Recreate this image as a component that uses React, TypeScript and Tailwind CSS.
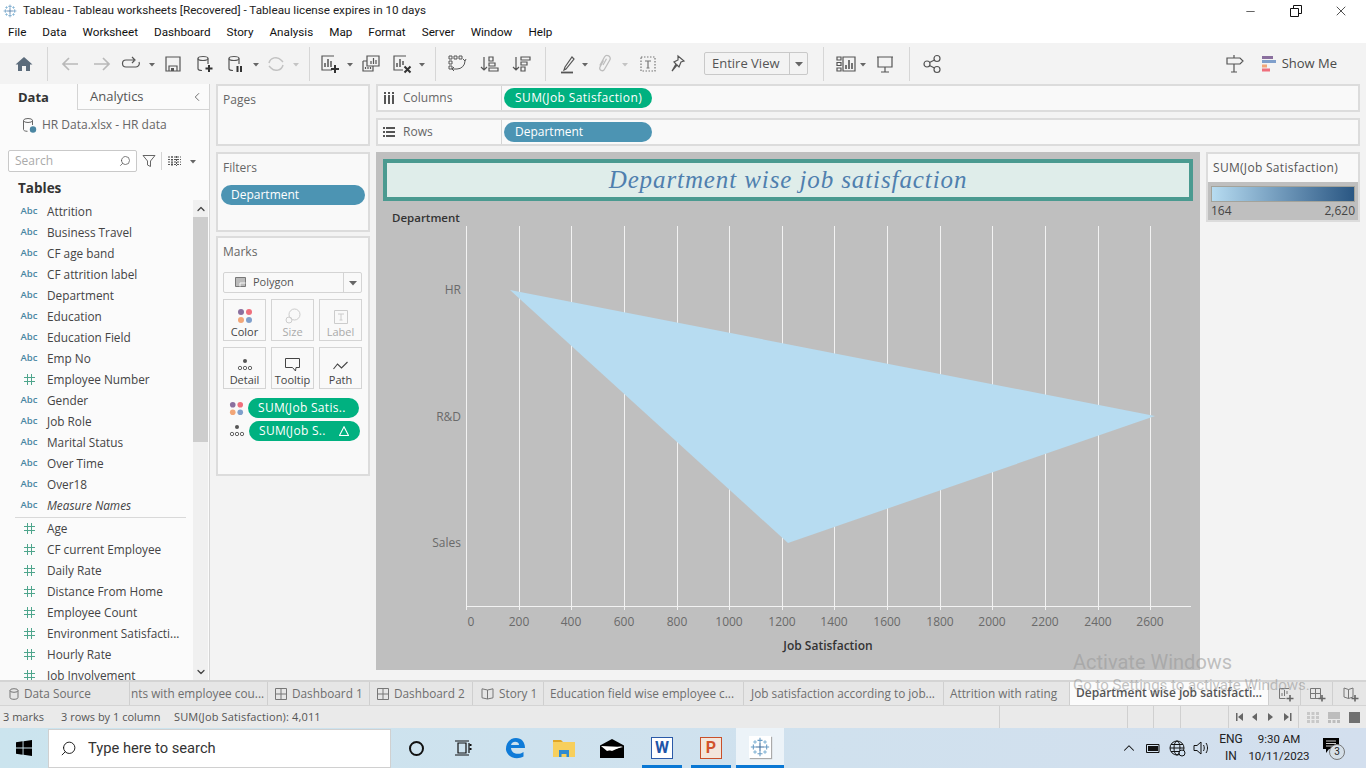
import type { ReactNode } from 'react'
import { ChevronLeft, ChevronUp, ChevronDown, Minus, X, Search } from 'lucide-react'

const menus = ['File', 'Data', 'Worksheet', 'Dashboard', 'Story', 'Analysis', 'Map', 'Format', 'Server', 'Window', 'Help']

const dimensions = [
  'Attrition',
  'Business Travel',
  'CF age band',
  'CF attrition label',
  'Department',
  'Education',
  'Education Field',
  'Emp No',
  '#Employee Number',
  'Gender',
  'Job Role',
  'Marital Status',
  'Over Time',
  'Over18',
]

const measures = [
  'Age',
  'CF current Employee',
  'Daily Rate',
  'Distance From Home',
  'Employee Count',
  'Environment Satisfacti...',
  'Hourly Rate',
  'Job Involvement',
]

const gridX = [466, 519, 571, 624, 677, 729, 782, 834, 887, 940, 992, 1045, 1098, 1150]

function Caret({ className = '', muted = false }: { className?: string; muted?: boolean }) {
  return (
    <svg width="8" height="20" viewBox="0 0 8 20" className={`shrink-0 ${className}`}>
      <path d="M1 9h6l-3 3.5z" fill={muted ? '#c4c4c4' : '#666'} />
    </svg>
  )
}

function Sep({ className = '' }: { className?: string }) {
  return <div className={`w-px h-[34px] bg-[#d6d6d6] shrink-0 ${className}`} />
}

function Ico({ className = '', children, color = '#5f6b73' }: { className?: string; children: ReactNode; color?: string }) {
  return (
    <svg width="20" height="20" viewBox="0 0 20 20" fill="none" stroke={color} strokeWidth="1.2" className={`shrink-0 ${className}`}>
      {children}
    </svg>
  )
}

function Dots({ size = 16 }: { size?: number }) {
  return (
    <svg width={size} height={size} viewBox="0 0 16 16" className="shrink-0">
      <circle cx="4" cy="4" r="3" fill="#8a6f9e" />
      <circle cx="12" cy="4" r="3" fill="#ef6f7c" />
      <circle cx="4" cy="12" r="3" fill="#f2a678" />
      <circle cx="12" cy="12" r="3" fill="#7f9fcb" />
    </svg>
  )
}

function DetailDots() {
  return (
    <svg width="16" height="14" viewBox="0 0 16 14" fill="none" stroke="#555" strokeWidth="0.9" className="shrink-0">
      <circle cx="8" cy="3" r="2" fill="#555" stroke="none" />
      <circle cx="3" cy="10" r="1.7" />
      <circle cx="8" cy="10" r="1.7" />
      <circle cx="13" cy="10" r="1.7" />
    </svg>
  )
}

function TableauLogo({ size = 16 }: { size?: number }) {
  const cross = (x: number, y: number, r: number, c: string, key: string) => (
    <path key={key} d={`M${x - r} ${y}H${x + r}M${x} ${y - r}V${y + r}`} stroke={c} strokeWidth="1.3" />
  )
  return (
    <svg width={size} height={size} viewBox="0 0 24 24" fill="none" className="shrink-0">
      {cross(12, 12, 5, '#3f6f9e', 'c')}
      {cross(12, 4, 3, '#6a9cc4', 't')}
      {cross(12, 20, 3, '#6a9cc4', 'b')}
      {cross(4, 12, 3, '#6a9cc4', 'l')}
      {cross(20, 12, 3, '#6a9cc4', 'r')}
      {cross(6, 6, 2.2, '#7fb2d4', 'tl')}
      {cross(18, 6, 2.2, '#7fb2d4', 'tr')}
      {cross(6, 18, 2.2, '#7fb2d4', 'bl')}
      {cross(18, 18, 2.2, '#7fb2d4', 'br')}
    </svg>
  )
}

function Toolbar() {
  return (
    <div className="h-[41px] bg-[#f3f3f3] flex items-center shrink-0">
      <Ico className="ml-[14px]" color="#5b6b7b">
        <path d="M1.5 10.5 10 3l8.5 7.5H16V17h-4v-5H8v5H4v-6.500z" fill="#5b6b7b" stroke="none" />
      </Ico>
      <Sep className="ml-[13px]" />
      <Ico className="ml-[12px]" color="#b9b9b9">
        <path d="M18 10H3M9 4l-6 6 6 6" strokeWidth="1.7" />
      </Ico>
      <Ico className="ml-[12px]" color="#b9b9b9">
        <path d="M2 10h15M11 4l6 6-6 6" strokeWidth="1.7" />
      </Ico>
      <Ico className="ml-[9px]" color="#555">
        <path d="M13 6H5a3.500 3.500 0 0 0 0 7h10a3.500 3.500 0 0 0 3-5M11 3l3 3-3 3" />
      </Ico>
      <Caret className="ml-[7px]" />
      <Ico className="ml-[7px]" color="#555">
        <path d="M3 3h14v14H3zM6 17v-5h8v5" />
        <path d="M8 14h3v3H8z" fill="#555" stroke="none" />
      </Ico>
      <Ico className="ml-[12px]" color="#555">
        <ellipse cx="8" cy="4.500" rx="5" ry="2" />
        <path d="M3 4.500v10c0 1 1.500 2 4 2M13 4.500V10" />
        <path d="M14 11v7M10.500 14.500h7" stroke="#333" strokeWidth="2" />
      </Ico>
      <Ico className="ml-[11px]" color="#555">
        <ellipse cx="8" cy="4.500" rx="5" ry="2" />
        <path d="M3 4.500v10c0 1 1.500 2 4 2M13 4.500V10" />
        <path d="M11.500 12v6M15 12v6" stroke="#333" strokeWidth="2" />
      </Ico>
      <Caret className="ml-[6px]" />
      <Ico className="ml-[6px]" color="#c2c2c2">
        <path d="M3 9a7 7 0 0 1 12-3l2 2M17 11a7 7 0 0 1-12 3l-2-2" strokeWidth="1.500" />
      </Ico>
      <Caret className="ml-[6px]" muted />
      <Sep className="ml-[9px]" />
      <Ico className="ml-[10px]" color="#555">
        <path d="M14 2H2v14h10" />
        <path d="M5 13V9M8 13V5M11 13V7" strokeWidth="1.500" />
        <path d="M15 11v8M11 15h8" stroke="#333" strokeWidth="2" />
      </Ico>
      <Caret className="ml-[6px]" />
      <Ico className="ml-[7px]" color="#555">
        <path d="M6 2h12v10H6zM2 7h4M2 7v10h10v-5" />
        <path d="M10 10V7M12.500 10V4M15 10V6M4.500 15v-2M7 15v-2M9.500 15v-2" />
      </Ico>
      <Ico className="ml-[11px]" color="#555">
        <path d="M14 2H2v14h9" />
        <path d="M5 13V9M8 13V5M11 11V7" strokeWidth="1.500" />
        <path d="m12.500 12.500 6 6M18.500 12.500l-6 6" stroke="#333" strokeWidth="2" />
      </Ico>
      <Caret className="ml-[6px]" />
      <Sep className="ml-[9px]" />
      <Ico className="ml-[11px]" color="#555">
        <path d="M2 2h3v3H2zM7 2h3v3H7zM12 2h3v3h-3zM2 7h3v3H2zM2 12h3v3H2zM7 17l-2-2 2-2M5 15h5a8 8 0 0 0 8-8M16 5l2 2 1-2" strokeWidth="1" />
      </Ico>
      <Ico className="ml-[12px]" color="#555">
        <path d="M5 3v13M2 13l3 3 3-3M10 3h4v4h-4zM10 9h6v3h-6zM10 14h9v3h-9z" />
      </Ico>
      <Ico className="ml-[12px]" color="#555">
        <path d="M5 3v13M2 13l3 3 3-3M10 3h9v3h-9zM10 8h6v3h-6zM10 13h4v4h-4z" />
      </Ico>
      <Sep className="ml-[14px]" />
      <Ico className="ml-[12px]" color="#555">
        <path d="m7 13 7-10 2 2-8 10-2 1z" />
        <path d="M3 18.500h12" strokeWidth="1.800" />
      </Ico>
      <Caret className="ml-[3px]" />
      <Ico className="ml-[6px]" color="#bdbdbd">
        <path d="M8.500 6.500 5 13a2.500 2.500 0 0 0 4.500 2.300L14.800 6A3 3 0 0 0 9.500 3L4.800 11.500" strokeWidth="1.300" />
        <path d="m8 11 3.500-6.200" strokeWidth="1.300" />
      </Ico>
      <Caret className="ml-[6px]" muted />
      <Ico className="ml-[9px]" color="#777">
        <path d="M3 3h14v14H3z" strokeDasharray="1.500 1.500" />
        <path d="M7 7h6M10 7v7M8.500 14h3" />
      </Ico>
      <Ico className="ml-[9px]" color="#555">
        <path d="m11 2 6 5-3 1-2 5-2-2-5 6 4-7-2-2 4-2z" />
      </Ico>
      <div className="ml-[17px] w-[104px] h-[23px] flex border border-[#c9c9c9] rounded-[2px] text-[13px] text-[#555] shrink-0">
        <span className="w-[85px] border-r border-[#c9c9c9] pl-[7px] leading-[20px]">Entire View</span>
        <span className="flex-1 flex items-center justify-center">
          <svg width="8" height="6" viewBox="0 0 8 6">
            <path d="M0 1h8L4 5.500z" fill="#666" />
          </svg>
        </span>
      </div>
      <Sep className="ml-[15px]" />
      <Ico className="ml-[12px]" color="#555">
        <path d="M1 3h4v3H1zM1 8.500h4v3H1zM1 14h4v3H1zM7 3h12v14H7z" />
        <path d="M10 15v-4M13 15V6M16 15V9" strokeWidth="1.600" />
      </Ico>
      <Caret className="ml-[3px]" />
      <Ico className="ml-[8px]" color="#555">
        <path d="M2 3h16M3 3v10h14V3M10 13v5M6 18h8" />
      </Ico>
      <Sep className="ml-[14px]" />
      <Ico className="ml-[12px]" color="#555">
        <circle cx="5" cy="10" r="3" />
        <circle cx="15" cy="4.500" r="3" />
        <circle cx="15" cy="15.500" r="3" />
        <path d="m7.500 8.500 5-2.500M7.500 11.500l5 2.500" />
      </Ico>
      <Ico className="ml-auto" color="#555">
        <path d="M10 1v3M3 4h13l3 3-3 3H3zM10 10v8M7 18h6" />
      </Ico>
      <div className="ml-[18px] mr-[29px] flex items-center gap-[6px] text-[13px] text-[#4a4a4a]">
        <svg width="14" height="16" viewBox="0 0 14 16">
          <rect x="0" y="0" width="11" height="3" fill="#8a6f9e" />
          <rect x="0" y="4" width="14" height="3" fill="#7f9fcb" />
          <rect x="0" y="8.500" width="5" height="3" fill="#f2a678" />
          <rect x="0" y="12.500" width="8" height="3" fill="#ef6f7c" />
        </svg>
        <span>Show Me</span>
      </div>
    </div>
  )
}

function FieldRow({ name, icon, italic = false }: { name: string; icon: 'abc' | 'num'; italic?: boolean }) {
  return (
    <div className="h-[21px] flex items-center shrink-0">
      <span className="w-[47px] flex justify-center pl-[11px]">
        {icon === 'abc' ? (
          <span className="text-[9.500px] font-semibold text-[#4a86a2]">Abc</span>
        ) : (
          <svg width="11" height="11" viewBox="0 0 11 11" fill="none" stroke="#4ea58c" strokeWidth="1">
            <path d="M3.500 0v11M7.500 0v11M0 3.500h11M0 7.500h11" />
          </svg>
        )}
      </span>
      <span className={`text-[11.800px] text-[#444] whitespace-nowrap ${italic ? 'italic' : ''}`}>{name}</span>
    </div>
  )
}

function DataPane() {
  return (
    <aside className="w-[210px] h-full bg-[#fbfbfb] border-r border-[#d4d4d4] flex flex-col shrink-0 overflow-hidden">
      <div className="h-[26px] flex shrink-0">
        <div className="w-[77px] pl-[18px] text-[13px] font-bold text-[#333] leading-[27px]">Data</div>
        <div className="flex-1 flex items-center justify-between border-l border-b border-[#d4d4d4] pl-[12px] pr-[5px] pt-[1px] text-[13px] text-[#555]">
          <span>Analytics</span>
          <ChevronLeft size={14} strokeWidth={1.4} />
        </div>
      </div>
      <div className="h-[30px] flex items-center pl-[22px] gap-[5px] text-[12px] text-[#666] shrink-0">
        <svg width="15" height="16" viewBox="0 0 15 16" fill="none" stroke="#666" strokeWidth="1">
          <ellipse cx="6" cy="3.500" rx="4.500" ry="2" />
          <path d="M1.500 3.500v9c0 1 1.500 1.800 4 1.800M10.500 3.500V8" />
          <circle cx="11" cy="12.500" r="3.200" fill="#4a86a2" stroke="none" />
        </svg>
        <span>HR Data.xlsx - HR data</span>
      </div>
      <div className="mt-[10px] h-[22px] flex items-center pl-[8px] shrink-0">
        <div className="w-[129px] h-[22px] border border-[#c9c9c9] rounded-[2px] bg-white flex items-center justify-between pl-[6px] pr-[5px]">
          <span className="text-[12px] text-[#aaa]">Search</span>
          <Search size={12} strokeWidth={1.5} className="text-[#555] -scale-x-100" />
        </div>
        <svg width="14" height="14" viewBox="0 0 14 14" fill="none" stroke="#666" strokeWidth="1" className="ml-[5px]">
          <path d="M1 1.500h12L8.500 7v5.500L5.500 11V7z" />
        </svg>
        <div className="w-px h-[18px] bg-[#d4d4d4] ml-[5px]" />
        <svg width="13" height="10" viewBox="0 0 13 10" stroke="#555" strokeWidth="1" className="ml-[6px]">
          <path d="M0 1h13M0 3.500h13M0 6h13M0 8.500h13M4 0v10M8.500 0v10" strokeDasharray="2 1" />
        </svg>
        <Caret className="ml-[8px]" />
      </div>
      <div className="h-[28px] pl-[18px] text-[13.500px] font-bold text-[#333] leading-[33px] shrink-0">Tables</div>
      <div className="flex-1 flex min-h-0">
        <div className="w-[193px] overflow-hidden flex flex-col shrink-0 pt-[1px]">
          {dimensions.map((d) =>
            d.startsWith('#') ? <FieldRow key={d} name={d.slice(1)} icon="num" /> : <FieldRow key={d} name={d} icon="abc" />
          )}
          <FieldRow name="Measure Names" icon="abc" italic />
          <div className="h-px bg-[#d9d9d9] mx-[15px] mt-[1px] w-[171px] shrink-0" />
          {measures.map((m) => (
            <FieldRow key={m} name={m} icon="num" />
          ))}
        </div>
        <div className="w-[15px] flex flex-col bg-[#f0f0f0] shrink-0">
          <div className="h-[17px] flex items-center justify-center">
            <ChevronUp size={12} strokeWidth={2.5} className="text-[#444]" />
          </div>
          <div className="h-[225px] bg-[#cdcdcd]" />
          <div className="flex-1" />
          <div className="h-[17px] flex items-center justify-center">
            <ChevronDown size={12} strokeWidth={2.5} className="text-[#444]" />
          </div>
        </div>
      </div>
    </aside>
  )
}

function MarkCard({ label, dim = false, children }: { label: string; dim?: boolean; children: ReactNode }) {
  return (
    <div className="w-[43px] h-[42px] border border-[#d4d4d4] flex flex-col items-center">
      <div className="h-[24px] flex items-end justify-center">{children}</div>
      <span className={`text-[11px] leading-[15px] ${dim ? 'text-[#aaa]' : 'text-[#444]'}`}>{label}</span>
    </div>
  )
}

function Shelves() {
  return (
    <div className="w-[154px] ml-[6px] flex flex-col shrink-0">
      <div className="h-[62px] border-2 border-[#dcdcdc] bg-[#f9f9f9] px-[5px] pt-[5px] text-[12px] text-[#666]">Pages</div>
      <div className="h-[80px] mt-[6px] border-2 border-[#dcdcdc] bg-[#f9f9f9] pt-[5px] text-[12px] text-[#666]">
        <div className="px-[5px]">Filters</div>
        <div className="mt-[8px] mx-[3px] h-[20px] rounded-full bg-[#4c94b3] text-white pl-[10px] leading-[20px]">Department</div>
      </div>
      <div className="h-[240px] mt-[4px] border-2 border-[#dcdcdc] bg-[#f9f9f9] pt-[5px] text-[12px] text-[#666]">
        <div className="px-[5px]">Marks</div>
        <div className="mt-[11px] mx-[5px] w-[139px] h-[21px] border border-[#d4d4d4] rounded-[2px] flex items-center text-[11px] text-[#555]">
          <svg width="12" height="11" viewBox="0 0 12 11" fill="none" stroke="#777" className="ml-[11px]">
            <path d="M.5.500h10v9H.500z" fill="#bbb" />
            <path d="M5 9.500V6h5.500" stroke="#f9f9f9" />
          </svg>
          <span className="ml-[6px]">Polygon</span>
          <span className="ml-auto w-[18px] h-full border-l border-[#d4d4d4] flex items-center justify-center">
            <svg width="8" height="6" viewBox="0 0 8 6">
              <path d="M0 1h8L4 5.500z" fill="#666" />
            </svg>
          </span>
        </div>
        <div className="mt-[6px] mx-[5px] grid grid-cols-[43px_43px_43px] gap-x-[5px] gap-y-[6px]">
          <MarkCard label="Color">
            <Dots />
          </MarkCard>
          <MarkCard label="Size" dim>
            <svg width="16" height="16" viewBox="0 0 16 16" fill="none" stroke="#ccc">
              <circle cx="9.500" cy="6.500" r="5.500" />
              <circle cx="4" cy="12" r="3" />
            </svg>
          </MarkCard>
          <MarkCard label="Label" dim>
            <svg width="14" height="14" viewBox="0 0 14 14" fill="none" stroke="#ccc">
              <path d="M.5.500h13v13H.500zM4 4h6M7 4v6M5.500 10h3" />
            </svg>
          </MarkCard>
          <MarkCard label="Detail">
            <DetailDots />
          </MarkCard>
          <MarkCard label="Tooltip">
            <svg width="15" height="15" viewBox="0 0 15 15" fill="none" stroke="#444">
              <path d="M.5 1.500h14v9H11L10.500 14 7.500 10.500h-7z" />
            </svg>
          </MarkCard>
          <MarkCard label="Path">
            <svg width="15" height="12" viewBox="0 0 15 12" fill="none" stroke="#444" strokeWidth="1.100">
              <path d="m.5 9 4-5 4 4 6-6" />
            </svg>
          </MarkCard>
        </div>
        <div className="mt-[9px] pl-[11px] flex items-center gap-[4px]">
          <Dots size={15} />
          <div className="w-[111px] h-[20px] rounded-full bg-[#00b180] text-white pl-[10px] tracking-[0.3px] leading-[20px] whitespace-nowrap">SUM(Job Satis..</div>
        </div>
        <div className="mt-[3px] pl-[11px] flex items-center gap-[4px]">
          <DetailDots />
          <div className="w-[111px] h-[20px] rounded-full bg-[#00b180] text-white pl-[10px] pr-[11px] tracking-[0.3px] flex items-center justify-between whitespace-nowrap">
            <span>SUM(Job S..</span>
            <svg width="10" height="10" viewBox="0 0 10 10" fill="none" stroke="#fff" strokeWidth="1.100">
              <path d="M5 .800 9.500 9.500H.500z" />
            </svg>
          </div>
        </div>
      </div>
    </div>
  )
}

function ShelfRow({ label, icon, children }: { label: string; icon: ReactNode; children: ReactNode }) {
  return (
    <div className="h-[28px] border-2 border-[#dcdcdc] bg-[#f9f9f9] flex items-center">
      <div className="w-[124px] h-full border-r border-[#d4d4d4] flex items-center pl-[5px] gap-[8px] text-[12px] text-[#666]">
        {icon}
        <span>{label}</span>
      </div>
      {children}
    </div>
  )
}

function Chart() {
  return (
    <div className="w-[824px] h-[518px] bg-[#bfbfbf] flex flex-col">
      <div className="mt-[7px] mx-[7px] h-[42px] border-[4px] border-[#4a9a90] bg-[#dfedea] flex items-center justify-center shrink-0">
        <span className="font-['Liberation_Serif',serif] italic text-[25px] tracking-[0.9px] text-[#4f7fae]">Department wise job satisfaction</span>
      </div>
      <svg viewBox="376 201 824 469" width="824" height="469" className="block">
        {gridX.map((x) => (
          <line key={x} x1={x + 0.5} x2={x + 0.5} y1={226} y2={610} stroke="#f2f2f2" strokeWidth="1" />
        ))}
        <line x1={466} x2={1191} y1={606.5} y2={606.5} stroke="#f2f2f2" strokeWidth="1" />
        <polygon points="510,290 1155,416 788,543" fill="#b7dcf1" />
        <g fontSize="12" fill="#6a6a6a" textAnchor="end">
          <text x={461} y={294}>HR</text>
          <text x={461} y={421}>R&amp;D</text>
          <text x={461} y={547}>Sales</text>
        </g>
        <g fontSize="12" fill="#6a6a6a" textAnchor="middle">
          {gridX.map((x, i) => (
            <text key={x} x={i === 0 ? x + 5 : x} y={626}>
              {i * 200}
            </text>
          ))}
        </g>
        <text x={392} y={222} fontSize="11.500" fontWeight="600" fill="#333">
          Department
        </text>
        <text x={828} y={650} fontSize="12" fontWeight="600" fill="#333" textAnchor="middle">
          Job Satisfaction
        </text>
      </svg>
    </div>
  )
}

function Legend() {
  return (
    <div className="w-[154px] h-[70px] ml-[6px] border-2 border-[#dcdcdc] bg-[#bfbfbf] flex flex-col shrink-0">
      <div className="h-[28px] bg-[#f9f9f9] pl-[5px] text-[12px] tracking-[0.3px] text-[#555] leading-[27px] shrink-0">SUM(Job Satisfaction)</div>
      <div className="mx-[3px] mt-[4px] h-[16px] border border-[#a3a39b] bg-gradient-to-r from-[#b7dcf1] to-[#2a5783] shrink-0" />
      <div className="mx-[3px] flex justify-between text-[12px] text-[#444] leading-[18px] shrink-0">
        <span>164</span>
        <span>2,620</span>
      </div>
    </div>
  )
}

function SheetTabs() {
  const tabIcon = (kind: string) => {
    if (kind === 'dash')
      return (
        <svg width="12" height="12" viewBox="0 0 12 12" fill="none" stroke="#777">
          <path d="M.5.500h11v11H.500zM6 .500v11M.5 6h11" />
        </svg>
      )
    return (
      <svg width="13" height="12" viewBox="0 0 13 12" fill="none" stroke="#777">
        <path d="M6.500 2 1 .800v9L6.500 11 12 9.800v-9zM6.500 2v9" />
      </svg>
    )
  }
  const cell = 'h-full border-r border-[#cfcfcf] flex items-center text-[11.800px] text-[#6e6e6e] whitespace-nowrap overflow-hidden shrink-0'
  return (
    <div className="h-[26px] bg-[#e6e6e6] border-t-2 border-b border-[#d4d4d4] flex shrink-0">
      <div className={`${cell} w-[130px] pl-[9px] gap-[5px]`}>
        <svg width="10" height="12" viewBox="0 0 10 12" fill="none" stroke="#777">
          <ellipse cx="5" cy="2.500" rx="4" ry="1.800" />
          <path d="M1 2.500v7c0 1 1.500 1.800 4 1.800s4-.800 4-1.800v-7" />
        </svg>
        <span>Data Source</span>
      </div>
      <div className={`${cell} w-[138px] pl-[1px]`}>nts with employee cou...</div>
      <div className={`${cell} w-[102px] pl-[7px] gap-[5px]`}>
        {tabIcon('dash')}
        <span>Dashboard 1</span>
      </div>
      <div className={`${cell} w-[103px] pl-[7px] gap-[5px]`}>
        {tabIcon('dash')}
        <span>Dashboard 2</span>
      </div>
      <div className={`${cell} w-[71px] pl-[8px] gap-[5px]`}>
        {tabIcon('story')}
        <span>Story 1</span>
      </div>
      <div className={`${cell} w-[200px] pl-[6px]`}>Education field wise employee c...</div>
      <div className={`${cell} w-[200px] pl-[7px]`}>Job satisfaction according to job...</div>
      <div className={`${cell} w-[126px] pl-[6px]`}>Attrition with rating</div>
      <div className="w-[199px] h-full bg-[#fbfbfb] border-r border-[#cfcfcf] pl-[6px] text-[12px] font-semibold text-[#555] leading-[21px] whitespace-nowrap overflow-hidden shrink-0">
        Department wise job satisfacti...
      </div>
      <div className="w-[32px] h-full border-r border-[#cfcfcf] flex items-center justify-center pl-[3px] shrink-0">
        <svg width="16" height="16" viewBox="0 0 16 16" fill="none" stroke="#777">
          <path d="M11 2.500H1.500v10h6M4 10V7M6.500 10V4M9 8V5" />
          <path d="M12 9v6.500M8.500 12.500h7" stroke="#666" strokeWidth="1.600" />
        </svg>
      </div>
      <div className="w-[32px] h-full border-r border-[#cfcfcf] flex items-center justify-center pl-[3px] shrink-0">
        <svg width="16" height="16" viewBox="0 0 16 16" fill="none" stroke="#777">
          <path d="M.5 2.500h10v10H.500zM5.500 2.500v10M.5 7.500h10" />
          <path d="M12 9v6.500M8.500 12.500h7" stroke="#666" strokeWidth="1.600" />
        </svg>
      </div>
      <div className="flex-1 flex items-center justify-center pl-[3px]">
        <svg width="16" height="16" viewBox="0 0 16 16" fill="none" stroke="#777">
          <path d="M5.500 3.500 1 2v9l4.500 1.500L10 11V2zM5.500 3.500v9" />
          <path d="M12 9v6.500M8.500 12.500h7" stroke="#666" strokeWidth="1.600" />
        </svg>
      </div>
    </div>
  )
}

function StatusBar() {
  return (
    <div className="h-[22px] bg-[#eaeaea] flex items-center text-[11px] text-[#555] shrink-0">
      <span className="w-[58px] pl-[3px]">3 marks</span>
      <span className="ml-[3px] w-[113px]">3 rows by 1 column</span>
      <span className="w-[825px] tracking-[0.15px]">SUM(Job Satisfaction): 4,011</span>
      <span className="w-px h-full bg-[#d0d0d0]" />
      <span className="w-[127px]" />
      <span className="w-px h-full bg-[#d0d0d0]" />
      <span className="w-[25px]" />
      <span className="w-px h-full bg-[#d0d0d0]" />
      <span className="w-[26px]" />
      <span className="w-px h-full bg-[#d0d0d0]" />
      <span className="w-[47px]" />
      <span className="w-px h-full bg-[#d0d0d0]" />
      <svg width="60" height="10" viewBox="0 0 60 10" fill="#666" className="ml-[6px]">
        <path d="M1 1h1.500v8H1zM8 1v8L3 5zM22 1v8l-5-4zM33 1v8l5-4zM49 1v8l5-4zM55 1h1.500v8H55z" />
      </svg>
      <span className="ml-[3px] w-px h-full bg-[#d0d0d0]" />
      <div className="ml-auto flex items-center gap-[9px] mr-[6px]">
        <svg width="12" height="11" viewBox="0 0 12 11" fill="#c8c8c8">
          <path d="M0 0h3v3H0zM4.500 0h3v3h-3zM9 0h3v3H9zM0 4h3v3H0zM4.500 4h3v3h-3zM9 4h3v3H9zM0 8h3v3H0zM4.500 8h3v3h-3zM9 8h3v3H9z" />
        </svg>
        <svg width="12" height="11" viewBox="0 0 12 11" fill="#bdbdbd">
          <path d="M0 0h12v7H0zM0 8h3v3H0zM4.500 8h3v3h-3zM9 8h3v3H9z" />
        </svg>
        <svg width="11" height="11" viewBox="0 0 11 11" fill="#707070">
          <path d="M0 0h11v11H0z" />
        </svg>
      </div>
    </div>
  )
}

function Taskbar() {
  return (
    <div className="h-[40px] bg-gradient-to-r from-[#cbe4ee] to-[#d3dfee] flex items-center shrink-0 font-['Roboto',sans-serif]">
      <div className="w-[48px] flex justify-center shrink-0">
        <svg width="16" height="16" viewBox="0 0 16 16" fill="#000">
          <path d="M0 2.300 6.600 1.300V7.600H0zM7.500 1.200 16 0v7.600H7.500zM0 8.400h6.600v6.300L0 13.700zM7.500 8.400H16V16l-8.500-1.200z" />
        </svg>
      </div>
      <div className="w-[343px] h-[39px] bg-white border border-[#d0d0d0] flex items-center pl-[11px] gap-[11px] text-[14.700px] text-[#333] shrink-0">
        <Search size={17} strokeWidth={1.3} className="text-[#111] -scale-x-100" />
        <span>Type here to search</span>
      </div>
      <div className="w-[50px] flex justify-center shrink-0">
        <div className="w-[15px] h-[15px] rounded-full border-[2.500px] border-[#111]" />
      </div>
      <div className="w-[44px] flex justify-center shrink-0">
        <svg width="18" height="16" viewBox="0 0 18 16" fill="none" stroke="#111" strokeWidth="1.200">
          <path d="M4 3h8v10H4zM1 1h14M1 15h14M15 3v10" />
          <path d="M16.500 4v2M16.500 8v2" strokeWidth="2" />
        </svg>
      </div>
      <div className="w-[60px] flex justify-center shrink-0">
        <svg width="22" height="22" viewBox="0 0 22 22" fill="none">
          <path d="M2 13C1.500 6 6 1 12 1c5.500 0 9 4 9 10H7c.3 6 8 7.500 12.500 4v4.500C13 23 4 21 2 13z" fill="#0f7bd8" />
          <path d="M7 8h8c0-4-7-4.500-8 0z" fill="#cde2ee" />
        </svg>
      </div>
      <div className="w-[37px] flex justify-center shrink-0">
        <svg width="22" height="20" viewBox="0 0 22 20">
          <path d="M0 2h8l2 2H0z" fill="#e0a526" />
          <path d="M0 4h22v15H0z" fill="#f7cf5c" />
          <path d="M6 12h10v7h-2.500v-3h-5v3H6z" fill="#2f8bd1" />
        </svg>
      </div>
      <div className="w-[60px] flex justify-center shrink-0">
        <svg width="24" height="19" viewBox="0 0 24 19">
          <path d="M0 6.500 12 0l12 6.500V19H0z" fill="#000" />
          <path d="M1 7 23 8 7 12z" fill="#fff" />
          <path d="M1 7 12 1l11 6z" fill="#000" />
          <path d="m6 10 17-3-11 5z" fill="#fff" />
        </svg>
      </div>
      <div className="w-[40px] h-full flex items-center justify-center shrink-0 border-b-[3px] border-[#0a78d4] pt-[2px]">
        <div className="w-[22px] h-[22px] bg-[#fff] border border-[#2b5aa8] flex items-center justify-center text-[16px] font-bold text-[#1f56a8] leading-none">W</div>
      </div>
      <div className="w-[9px] shrink-0" />
      <div className="w-[40px] h-full flex items-center justify-center shrink-0 border-b-[3px] border-[#0a78d4] pt-[2px]">
        <div className="w-[22px] h-[22px] bg-[#f3e6dc] border border-[#c9502a] flex items-center justify-center text-[16px] font-bold text-[#d2522a] leading-none">P</div>
      </div>
      <div className="w-[5px] shrink-0" />
      <div className="w-[48px] h-full bg-[#ecf3f8] flex items-center justify-center shrink-0 border-b-[3px] border-[#0a78d4]">
        <div className="w-[22px] h-[22px] bg-white flex items-center justify-center shadow-[1px_1px_1px_#aaa]">
          <TableauLogo size={20} />
        </div>
      </div>
      <div className="ml-auto flex items-center shrink-0">
        <ChevronUp size={18} strokeWidth={1.4} className="text-[#111]" />
        <svg width="15" height="9" viewBox="0 0 15 9" fill="none" stroke="#111" className="ml-[8px]">
          <path d="M.5.500h12.500v8H.500z" />
          <path d="M2 2h10v5H2z" fill="#111" stroke="none" />
        </svg>
        <svg width="17" height="17" viewBox="0 0 17 17" fill="none" stroke="#111" className="ml-[8px]">
          <circle cx="8" cy="8" r="7" />
          <ellipse cx="8" cy="8" rx="3" ry="7" />
          <path d="M1 8h14M2 4.500h12M2 11.500h12" />
          <circle cx="13" cy="13" r="3" fill="#cfdfee" />
        </svg>
        <svg width="17" height="16" viewBox="0 0 17 16" fill="none" stroke="#111" className="ml-[7px]">
          <path d="M1 5.500h3L8 2v12l-4-3.500H1zM10.500 5c1 1.800 1 4.200 0 6M13 3c2 3 2 7 0 10" />
        </svg>
        <div className="ml-[8px] w-[26px] flex flex-col items-center text-[12px] leading-[17px] text-[#222]">
          <span>ENG</span>
          <span>IN</span>
        </div>
        <div className="ml-[4px] w-[62px] flex flex-col items-center text-[11.500px] leading-[17px] text-[#222]">
          <span>9:30 AM</span>
          <span>10/11/2023</span>
        </div>
        <div className="relative w-[24px] h-[24px] ml-[11px] mr-[21px]">
          <svg width="16" height="16" viewBox="0 0 16 16" className="absolute left-[2px] top-[2px]">
            <path d="M0 0h16v11H6l-3 4v-4H0z" fill="#000" />
            <path d="M3 3h10M3 5.500h10M3 8h7" stroke="#fff" strokeWidth="0.800" />
          </svg>
          <span className="absolute left-[8px] top-[8px] w-[16px] h-[16px] rounded-full bg-[#d5dfe8] border border-[#777] text-[10px] leading-[14px] text-center text-[#222]">3</span>
        </div>
      </div>
    </div>
  )
}

export default function App() {
  return (
    <div className="relative w-[1366px] h-[768px] bg-[#f3f3f3] overflow-hidden flex flex-col font-['Open_Sans',sans-serif]">
      <div className="h-[22px] bg-white flex items-center pl-[3px] shrink-0 font-['Roboto',sans-serif] text-[11.700px] text-[#222]">
        <TableauLogo size={14} />
        <span className="ml-[6px]">Tableau - Tableau worksheets [Recovered] - Tableau license expires in 10 days</span>
        <div className="ml-auto flex items-center mr-[17px] text-[#111]">
          <Minus size={13} strokeWidth={1.2} />
          <svg width="12" height="12" viewBox="0 0 12 12" fill="none" stroke="#111" className="ml-[33px]">
            <path d="M.5 3.500h8v8h-8zM3.500 3.500v-3h8v8h-3" />
          </svg>
          <X size={16} strokeWidth={1.1} className="ml-[31px]" />
        </div>
      </div>
      <div className="h-[21px] bg-white flex items-center pl-[8px] gap-[16px] shrink-0 font-['Roboto',sans-serif] text-[11.700px] text-[#111]">
        {menus.map((m) => (
          <span key={m}>{m}</span>
        ))}
      </div>
      <Toolbar />
      <div className="h-[596px] flex shrink-0">
        <DataPane />
        <Shelves />
        <div className="flex flex-col ml-[6px] mr-[6px] flex-1 min-w-0">
          <ShelfRow
            label="Columns"
            icon={
              <svg width="12" height="12" viewBox="0 0 12 12" fill="#555">
                <path d="M1 0h2v2H1zM5 0h2v2H5zM9 0h2v2H9zM1 3h2v9H1zM5 3h2v9H5zM9 3h2v9H9z" />
              </svg>
            }
          >
            <div className="ml-[2px] w-[148px] h-[20px] rounded-full text-white text-[12px] tracking-[0.4px] pl-[11px] leading-[20px] bg-[#00b180]">SUM(Job Satisfaction)</div>
          </ShelfRow>
          <div className="h-[6px]" />
          <ShelfRow
            label="Rows"
            icon={
              <svg width="12" height="12" viewBox="0 0 12 12" fill="#555">
                <path d="M0 1h2v2H0zM3 1h9v2H3zM0 5h2v2H0zM3 5h9v2H3zM0 9h2v2H0zM3 9h9v2H3z" />
              </svg>
            }
          >
            <div className="ml-[2px] w-[148px] h-[20px] rounded-full text-white text-[12px] pl-[11px] leading-[20px] bg-[#4c94b3]">Department</div>
          </ShelfRow>
          <div className="h-[6px]" />
          <div className="flex">
            <Chart />
            <Legend />
          </div>
        </div>
      </div>
      <SheetTabs />
      <StatusBar />
      <Taskbar />
      <div className="absolute left-[1073px] top-[650px] text-[20px] leading-[24px] text-[#9a9a9a]/60 font-['Roboto',sans-serif] pointer-events-none">Activate Windows</div>
      <div className="absolute left-[1073px] top-[676px] text-[15px] leading-[18px] text-[#9a9a9a]/60 whitespace-nowrap font-['Roboto',sans-serif] pointer-events-none">Go to Settings to activate Windows.</div>
    </div>
  )
}
